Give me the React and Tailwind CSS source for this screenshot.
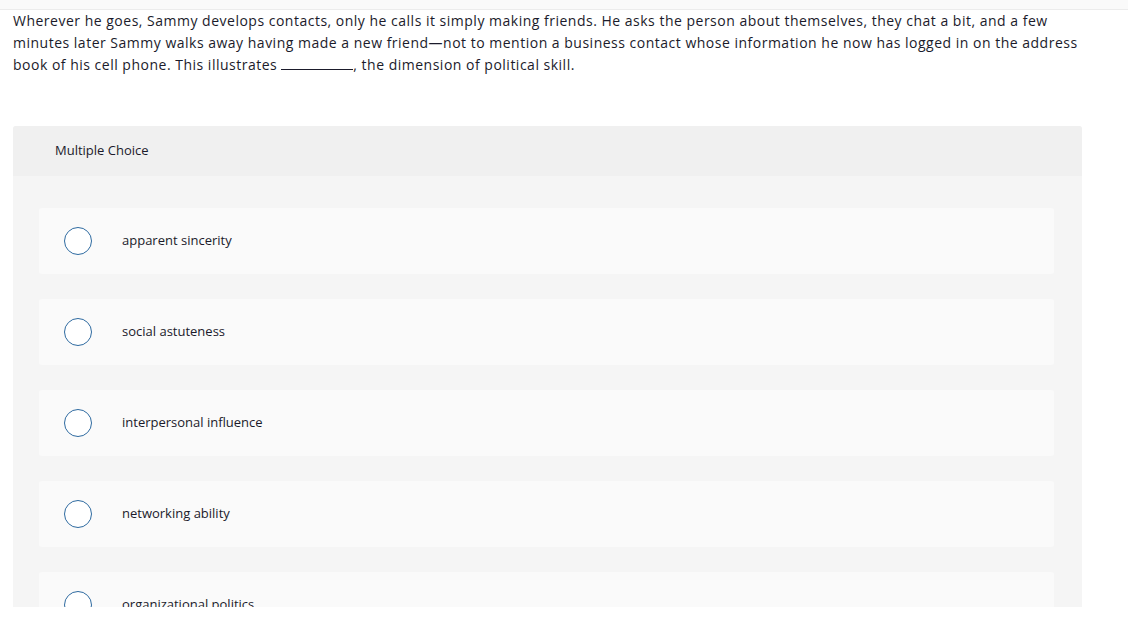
export default function App() {
  const options = [
    "apparent sincerity",
    "social astuteness",
    "interpersonal influence",
    "networking ability",
    "organizational politics",
  ];
  return (
    <div className="w-[1128px] h-[620px] bg-white overflow-hidden" style={{ fontFamily: '"Open Sans", "Liberation Sans", sans-serif' }}>
      <div className="h-[10px] bg-[#fafafa] border-b border-[#ececec]" />
      <div className="pl-[13px] pr-[10px] text-[14px] leading-[22px] tracking-[0.5px] text-[#1b1b2b] whitespace-nowrap">
        Wherever he goes, Sammy develops contacts, only he calls it simply making friends. He asks the person about themselves, they chat a bit, and a few
        <br />
        minutes later Sammy walks away having made a new friend—not to mention a business contact whose information he now has logged in on the address
        <br />
        book of his cell phone. This illustrates <span className="inline-block w-[72px] border-b border-[#1b1b2b] align-baseline"></span>, the dimension of political skill.
      </div>
      <div className="ml-[13px] mt-[50px] w-[1069px] h-[481px] overflow-hidden rounded-t-[3px] bg-[#f5f5f5]">
        <div className="h-[50px] bg-[#f0f0f0] flex items-center pl-[42px] text-[13px] text-[#1b1b2b]">
          Multiple Choice
        </div>
        <div className="flex flex-col gap-[25px] pt-[32px] pl-[26px] pr-[28px]">
          {options.map((o) => (
            <div key={o} className="h-[66px] shrink-0 bg-[#fafafa] rounded-[3px] flex items-center">
              <div className="ml-[25px] w-[28px] h-[28px] rounded-full border-[1.5px] border-[#2e6aa0] bg-white shrink-0" />
              <div className="ml-[30px] text-[13px] text-[#1b1b2b]">{o}</div>
            </div>
          ))}
        </div>
      </div>
    </div>
  );
}
